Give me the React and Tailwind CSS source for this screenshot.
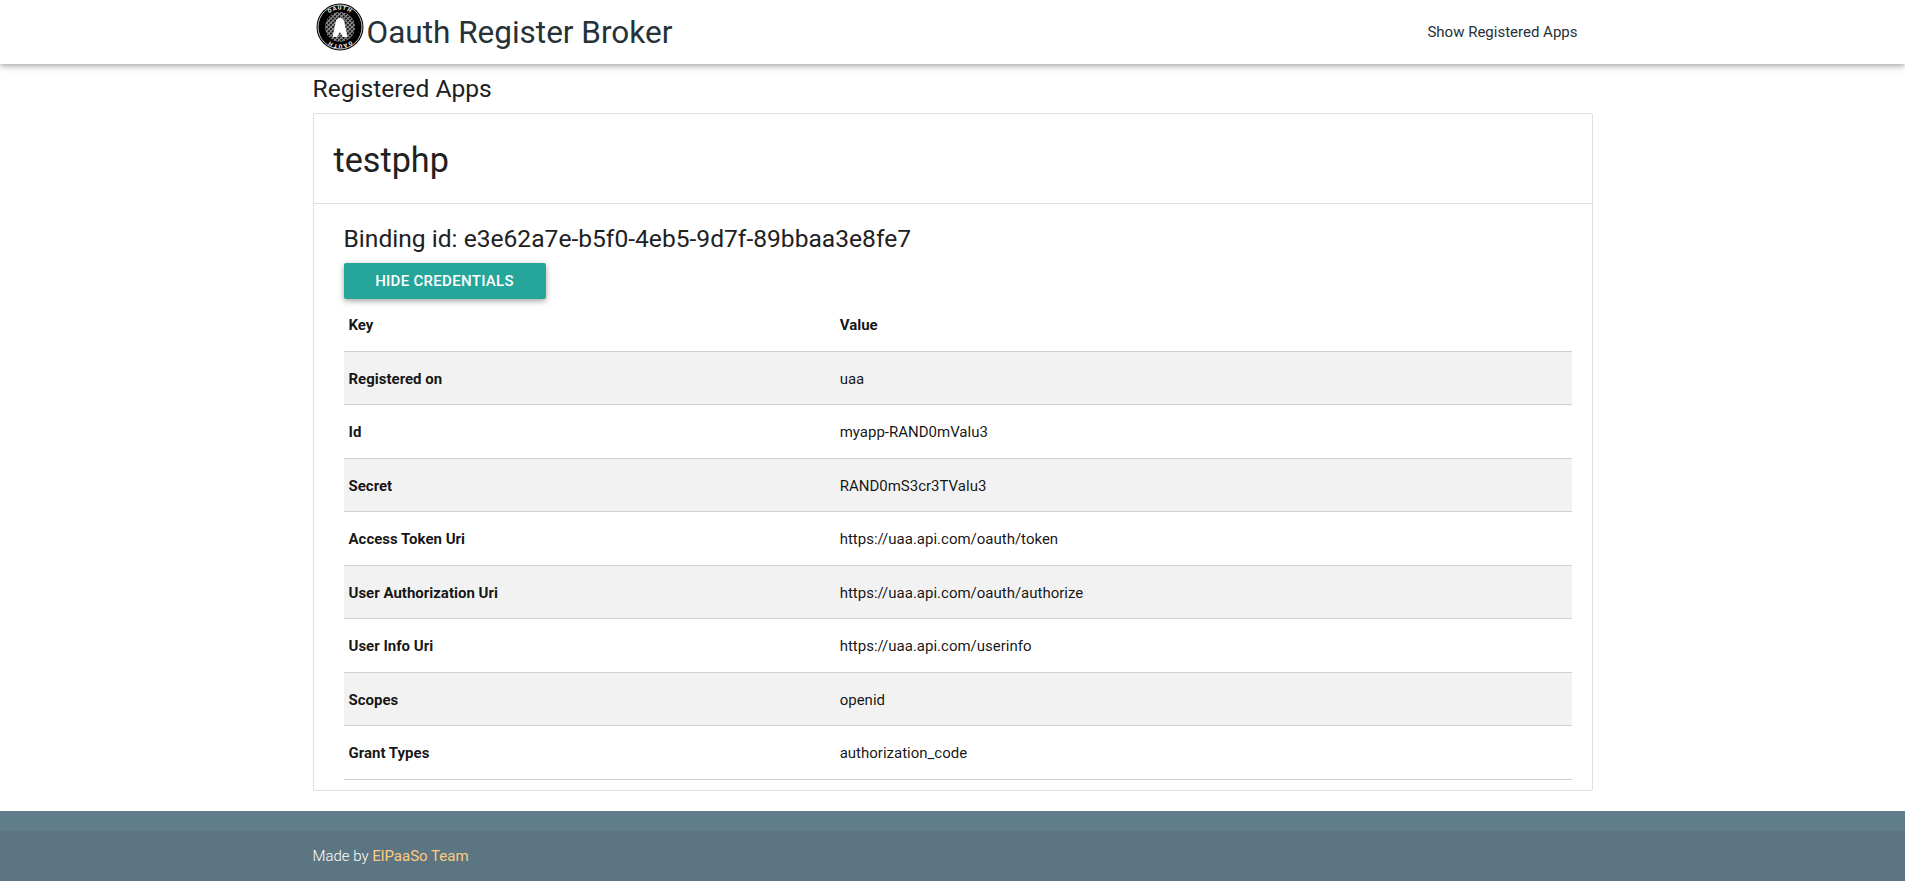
const rows = [
  ["Registered on", "uaa"],
  ["Id", "myapp-RAND0mValu3"],
  ["Secret", "RAND0mS3cr3TValu3"],
  ["Access Token Uri", "https://uaa.api.com/oauth/token"],
  ["User Authorization Uri", "https://uaa.api.com/oauth/authorize"],
  ["User Info Uri", "https://uaa.api.com/userinfo"],
  ["Scopes", "openid"],
  ["Grant Types", "authorization_code"],
];

function Logo() {
  return (
    <svg width="48" height="48" viewBox="0 0 48 48" className="shrink-0">
      <defs>
        <pattern id="hatch" width="3" height="3" patternUnits="userSpaceOnUse" patternTransform="rotate(45)">
          <rect width="3" height="3" fill="#111" />
          <rect width="1" height="3" fill="#aaa" />
          <rect width="3" height="1" fill="#888" />
        </pattern>
        <path id="logo-top" d="M6.500 24a17.500 17.500 0 0 1 35 0" />
        <path id="logo-bottom" d="M41.500 24a17.500 17.500 0 0 1-35 0" />
      </defs>
      <circle cx="24" cy="24" r="23.500" fill="#000" />
      <circle cx="24" cy="24" r="22" fill="none" stroke="#fff" strokeWidth="0.8" />
      <circle cx="24" cy="24" r="15" fill="url(#hatch)" />
      <path d="M24 15c2 0 3.500 1 4.200 3.500L31.500 34H27l-3-5-3 5h-4.500l3.300-15.500c.7-2.500 2.200-3.500 4.200-3.500z" fill="#fff" />
      <text fontSize="5.500" fontWeight="700" fill="#fff" letterSpacing="1" fontFamily="Roboto, sans-serif">
        <textPath href="#logo-top" startOffset="50%" textAnchor="middle">OAUTH</textPath>
      </text>
      <text fontSize="5.500" fontWeight="700" fill="#fff" letterSpacing="1" fontFamily="Roboto, sans-serif">
        <textPath href="#logo-bottom" startOffset="50%" textAnchor="middle">OAUTH</textPath>
      </text>
    </svg>
  );
}

export default function App() {
  return (
    <div className="min-h-[881px] flex flex-col bg-white font-['Roboto',sans-serif] text-[15px] leading-[22.5px] text-[rgba(0,0,0,0.92)]">
      <nav className="h-16 bg-white shadow-[0_2px_5px_0_rgba(0,0,0,0.26),0_2px_10px_0_rgba(0,0,0,0.12)]">
        <div className="w-[1280px] mx-auto h-full flex items-start justify-between">
          <a href="#" className="flex items-start pl-[3px] pt-[3px] text-[#263238]">
            <Logo />
            <span className="text-[31.5px] leading-[64px] -mt-[2px] ml-[3px]">Oauth Register Broker</span>
          </a>
          <a href="#" className="px-[15px] leading-[64px] text-[#263238]">Show Registered Apps</a>
        </div>
      </nav>

      <main className="w-[1280px] mx-auto flex-1">
        <h2 className="text-[24.6px] leading-[32px] mt-[9px] mb-[8px] text-[#212121]">Registered Apps</h2>
        <div className="border border-[#e0e0e0] rounded-[2px]">
          <div className="h-[90px] border-b border-[#e0e0e0] px-5 flex items-center">
            <h3 className="text-[34.2px] leading-[40px] pt-[2px] text-[#212121]">testphp</h3>
          </div>
          <div className="pl-[30px] pr-[20px] pt-[19px] pb-[10px]">
            <h4 className="text-[24.6px] leading-[32px] mb-[8px] text-[#212121]">Binding id: e3e62a7e-b5f0-4eb5-9d7f-89bbaa3e8fe7</h4>
            <button className="block h-9 w-[202px] rounded-[2px] bg-[#26a69a] text-white text-[15px] font-medium tracking-[0.3px] uppercase shadow-[0_2px_5px_0_rgba(0,0,0,0.26),0_2px_10px_0_rgba(0,0,0,0.12)]">
              Hide Credentials
            </button>
            <table className="w-full border-collapse text-left">
              <thead>
                <tr className="border-b border-[#d0d0d0]">
                  <th className="w-[40%] px-[5px] pt-[15px] pb-[14px] font-bold">Key</th>
                  <th className="px-[5px] pt-[15px] pb-[14px] font-bold">Value</th>
                </tr>
              </thead>
              <tbody>
                {rows.map(([k, v], i) => (
                  <tr key={k} className={`border-b border-[#d0d0d0] ${i % 2 === 0 ? "bg-[#f2f2f2]" : ""}`}>
                    <td className="px-[5px] pt-[16px] pb-[14px] font-bold">{k}</td>
                    <td className="px-[5px] pt-[16px] pb-[14px]">{v}</td>
                  </tr>
                ))}
              </tbody>
            </table>
          </div>
        </div>
      </main>

      <footer className="mt-5 h-[70px] bg-[#607d8b]">
        <div className="h-5" />
        <div className="h-[50px] bg-[#5b7582]">
          <div className="w-[1280px] mx-auto pt-[14px] font-light text-white">
            Made by <a href="#" className="font-normal text-[#ffcc80]">ElPaaSo Team</a>
          </div>
        </div>
      </footer>
    </div>
  );
}
